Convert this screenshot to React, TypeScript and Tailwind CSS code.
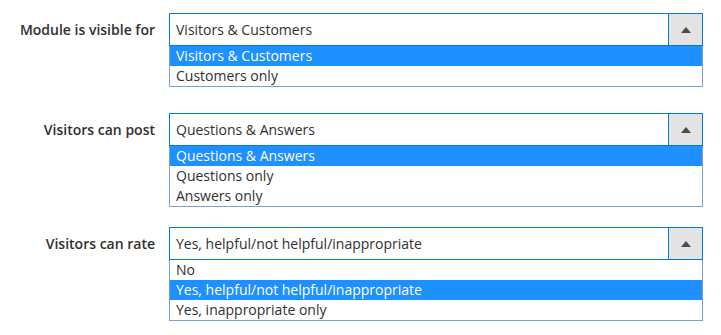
import React from "react";

interface SelectBlockProps {
  label: string;
  value: string;
  options: string[];
  selected: number;
  className?: string;
}

const SelectBlock: React.FC<SelectBlockProps> = ({ label, value, options, selected, className }) => {
  return (
    <div className={`flex items-start ${className ?? ""}`}>
      <label className="w-[155px] h-[33px] flex items-center justify-end text-[14px] font-semibold text-[#303030]">
        {label}
      </label>
      <div className="ml-[14px] w-[534px]">
        <div className="flex h-[33px] border border-[#007bdb] bg-white">
          <span className="flex-1 flex items-center px-[6px] text-[14px] text-[#303030]">{value}</span>
          <div className="w-[34px] border-l border-[#007bdb] bg-[#e3e3e3] flex items-center justify-center">
            <svg width="10" height="6" viewBox="0 0 10 6">
              <path d="M5 0 L10 6 L0 6 Z" fill="#514943" />
            </svg>
          </div>
        </div>
        <ul className="border border-t-0 border-[#7c9fd9] bg-white">
          {options.map((opt, i) => (
            <li
              key={i}
              className={`h-[20px] leading-[20px] px-[6px] text-[14px] ${
                i === selected ? "bg-[#1e90ff] text-white" : "text-[#303030]"
              }`}
            >
              {opt}
            </li>
          ))}
        </ul>
      </div>
    </div>
  );
};

export default function App() {
  return (
    <div className="w-[721px] h-[335px] bg-white pt-[13px] font-['Open_Sans',sans-serif]">
      <SelectBlock
        label="Module is visible for"
        value="Visitors & Customers"
        options={["Visitors & Customers", "Customers only"]}
        selected={0}
      />
      <SelectBlock
        className="mt-[26px]"
        label="Visitors can post"
        value="Questions & Answers"
        options={["Questions & Answers", "Questions only", "Answers only"]}
        selected={0}
      />
      <SelectBlock
        className="mt-[20px]"
        label="Visitors can rate"
        value="Yes, helpful/not helpful/inappropriate"
        options={["No", "Yes, helpful/not helpful/inappropriate", "Yes, inappropriate only"]}
        selected={1}
      />
    </div>
  );
}
